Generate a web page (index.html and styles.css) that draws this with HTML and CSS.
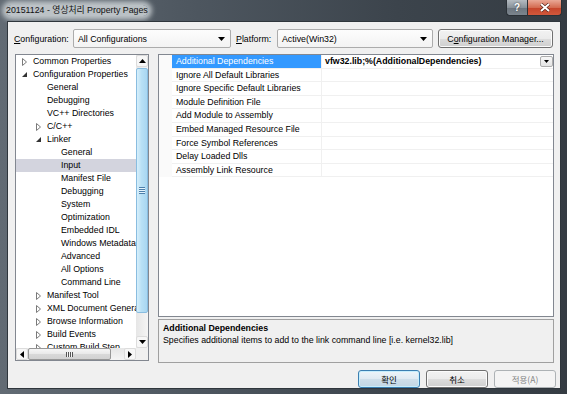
FILE: index.html
```html
<!DOCTYPE html>
<html lang="en">
<head>
  <meta charset="UTF-8" />
  <title>20151124 - 영상처리 Property Pages</title>
  <link rel="stylesheet" href="styles.css">
</head>
<body>
  <div class="window">
    <div class="titlebar">
      <span class="title">20151124 - 영상처리 Property Pages</span>
      <div class="caption-buttons">
        <span class="cap-btn cap-help">?</span>
        <span class="cap-btn cap-close">
          <svg width="10" height="9" viewBox="0 0 10 9"><path d="M1 1 L9 8 M9 1 L1 8" stroke="#4a1a10" stroke-width="3.2"/><path d="M1 1 L9 8 M9 1 L1 8" stroke="#fff" stroke-width="2"/></svg>
        </span>
      </div>
    </div>

    <div class="client">
      <div class="config-row">
        <span class="label label-config"><u>C</u>onfiguration:</span>
        <div class="combo combo-config">
          <span>All Configurations</span>
          <svg class="combo-arrow" width="7" height="4" viewBox="0 0 7 4"><polygon points="0,0 7,0 3.5,4" fill="#000"/></svg>
        </div>
        <span class="label label-platform"><u>P</u>latform:</span>
        <div class="combo combo-platform">
          <span>Active(Win32)</span>
          <svg class="combo-arrow" width="7" height="4" viewBox="0 0 7 4"><polygon points="0,0 7,0 3.5,4" fill="#000"/></svg>
        </div>
        <button class="btn btn-manager">C<u>o</u>nfiguration Manager...</button>
      </div>

      <div class="main">
        <div class="tree">
          <div class="tree-body">
            <div class="tree-items">
              <div class="tree-row lvl-0"><span class="twisty"><svg width="5" height="8" viewBox="0 0 5 8"><polygon points="0.5,0.5 4.5,4 0.5,7.5" fill="#fff" stroke="#7a7a7a"/></svg></span>Common Properties</div>
              <div class="tree-row lvl-0"><span class="twisty"><svg width="5" height="5" viewBox="0 0 5 5"><polygon points="5,0 5,5 0,5" fill="#333"/></svg></span>Configuration Properties</div>
              <div class="tree-row lvl-1"><span class="twisty"></span>General</div>
              <div class="tree-row lvl-1"><span class="twisty"></span>Debugging</div>
              <div class="tree-row lvl-1"><span class="twisty"></span>VC++ Directories</div>
              <div class="tree-row lvl-1"><span class="twisty"><svg width="5" height="8" viewBox="0 0 5 8"><polygon points="0.5,0.5 4.5,4 0.5,7.5" fill="#fff" stroke="#7a7a7a"/></svg></span>C/C++</div>
              <div class="tree-row lvl-1"><span class="twisty"><svg width="5" height="5" viewBox="0 0 5 5"><polygon points="5,0 5,5 0,5" fill="#333"/></svg></span>Linker</div>
              <div class="tree-row lvl-2"><span class="twisty"></span>General</div>
              <div class="tree-row lvl-2 selected"><span class="twisty"></span>Input</div>
              <div class="tree-row lvl-2"><span class="twisty"></span>Manifest File</div>
              <div class="tree-row lvl-2"><span class="twisty"></span>Debugging</div>
              <div class="tree-row lvl-2"><span class="twisty"></span>System</div>
              <div class="tree-row lvl-2"><span class="twisty"></span>Optimization</div>
              <div class="tree-row lvl-2"><span class="twisty"></span>Embedded IDL</div>
              <div class="tree-row lvl-2"><span class="twisty"></span>Windows Metadata</div>
              <div class="tree-row lvl-2"><span class="twisty"></span>Advanced</div>
              <div class="tree-row lvl-2"><span class="twisty"></span>All Options</div>
              <div class="tree-row lvl-2"><span class="twisty"></span>Command Line</div>
              <div class="tree-row lvl-1"><span class="twisty"><svg width="5" height="8" viewBox="0 0 5 8"><polygon points="0.5,0.5 4.5,4 0.5,7.5" fill="#fff" stroke="#7a7a7a"/></svg></span>Manifest Tool</div>
              <div class="tree-row lvl-1"><span class="twisty"><svg width="5" height="8" viewBox="0 0 5 8"><polygon points="0.5,0.5 4.5,4 0.5,7.5" fill="#fff" stroke="#7a7a7a"/></svg></span>XML Document Generator</div>
              <div class="tree-row lvl-1"><span class="twisty"><svg width="5" height="8" viewBox="0 0 5 8"><polygon points="0.5,0.5 4.5,4 0.5,7.5" fill="#fff" stroke="#7a7a7a"/></svg></span>Browse Information</div>
              <div class="tree-row lvl-1"><span class="twisty"><svg width="5" height="8" viewBox="0 0 5 8"><polygon points="0.5,0.5 4.5,4 0.5,7.5" fill="#fff" stroke="#7a7a7a"/></svg></span>Build Events</div>
              <div class="tree-row lvl-1"><span class="twisty"><svg width="5" height="8" viewBox="0 0 5 8"><polygon points="0.5,0.5 4.5,4 0.5,7.5" fill="#fff" stroke="#7a7a7a"/></svg></span>Custom Build Step</div>
            </div>
            <div class="vscroll">
              <div class="sb-btn"><svg width="7" height="4" viewBox="0 0 7 4"><polygon points="0,4 7,4 3.5,0" fill="#000"/></svg></div>
              <div class="vthumb"><span class="grip-v"></span></div>
              <div class="sb-track"></div>
              <div class="sb-btn"><svg width="7" height="4" viewBox="0 0 7 4"><polygon points="0,0 7,0 3.5,4" fill="#000"/></svg></div>
            </div>
          </div>
          <div class="hscroll">
            <div class="sb-btn"><svg width="4" height="7" viewBox="0 0 4 7"><polygon points="4,0 4,7 0,3.5" fill="#000"/></svg></div>
            <div class="hthumb"><span class="grip-h"></span></div>
            <div class="sb-track"></div>
            <div class="sb-btn"><svg width="4" height="7" viewBox="0 0 4 7"><polygon points="0,0 0,7 4,3.5" fill="#000"/></svg></div>
            <div class="sb-corner"></div>
          </div>
        </div>

        <div class="right">
          <div class="grid">
            <div class="grid-row">
              <span class="margin"></span>
              <span class="name selected">Additional Dependencies</span>
              <span class="value bold">vfw32.lib;%(AdditionalDependencies)
                <span class="drop-btn"><svg width="5" height="3" viewBox="0 0 5 3"><polygon points="0,0 5,0 2.5,3" fill="#000"/></svg></span>
              </span>
            </div>
            <div class="grid-row"><span class="margin"></span><span class="name">Ignore All Default Libraries</span><span class="value"></span></div>
            <div class="grid-row"><span class="margin"></span><span class="name">Ignore Specific Default Libraries</span><span class="value"></span></div>
            <div class="grid-row"><span class="margin"></span><span class="name">Module Definition File</span><span class="value"></span></div>
            <div class="grid-row"><span class="margin"></span><span class="name">Add Module to Assembly</span><span class="value"></span></div>
            <div class="grid-row"><span class="margin"></span><span class="name">Embed Managed Resource File</span><span class="value"></span></div>
            <div class="grid-row"><span class="margin"></span><span class="name">Force Symbol References</span><span class="value"></span></div>
            <div class="grid-row"><span class="margin"></span><span class="name">Delay Loaded Dlls</span><span class="value"></span></div>
            <div class="grid-row"><span class="margin"></span><span class="name">Assembly Link Resource</span><span class="value"></span></div>
          </div>
          <div class="desc">
            <div class="desc-title">Additional Dependencies</div>
            <div class="desc-text">Specifies additional items to add to the link command line [i.e. kernel32.lib]</div>
          </div>
        </div>
      </div>

      <div class="dialog-buttons">
        <button class="btn btn-default">확인</button>
        <button class="btn">취소</button>
        <button class="btn btn-disabled">적용(A)</button>
      </div>
    </div>
  </div>
</body>
</html>
```

FILE: styles.css
```css
* {
  box-sizing: border-box;
}
body {
  margin: 0;
  width: 567px;
  height: 394px;
  overflow: hidden;
  font-family: "Liberation Sans", "Noto Sans CJK KR", sans-serif;
  font-size: 8.8px;
  color: #000;
  background: #3f474f;
}
.window {
  height: 394px;
  display: flex;
  flex-direction: column;
  background: linear-gradient(to right, #626b74 0%, #4d565f 35%, #3c444c 70%, #353c43 100%);
}

/* title bar */
.titlebar {
  height: 21px;
  display: flex;
  align-items: flex-start;
  padding-left: 6px;
}
.title {
  margin-top: 5px;
  font-size: 8.8px;
  color: #111;
  background: rgba(205, 210, 214, 0.85);
  box-shadow: 0 0 5px 4px rgba(205, 210, 214, 0.85);
  border-radius: 6px;
  line-height: 11px;
}
.caption-buttons {
  margin-left: auto;
  margin-right: 5px;
  display: flex;
}
.cap-btn {
  height: 16px;
  display: flex;
  align-items: center;
  justify-content: center;
  border: 1px solid #2b3137;
  border-top: none;
}
.cap-help {
  width: 21px;
  border-radius: 0 0 0 4px;
  border-right: none;
  background: linear-gradient(#b4bbc1, #8a939b 50%, #6c757e 51%, #7c858e);
  color: #fff;
  font-weight: bold;
  font-size: 10px;
  text-shadow: 0 0 2px #333;
}
.cap-close {
  width: 35px;
  border-radius: 0 0 4px 0;
  background: linear-gradient(#e9a896, #d46c52 50%, #c5442a 51%, #d2583c);
}

/* client area */
.client {
  margin: 0 6px 5px 7px;
  height: 368px;
  border: 1px solid #2f363c;
  background: #f0f0f0;
  padding: 7px 4px 0 6px;
  display: flex;
  flex-direction: column;
}
.config-row {
  display: flex;
  align-items: center;
  height: 19px;
}
.label-config {
  width: 59px;
}
.label-platform {
  width: 41px;
  margin-left: 5px;
}
.combo {
  height: 19px;
  display: flex;
  align-items: center;
  padding: 0 4px;
  border: 1px solid #acacac;
  border-radius: 2px;
  background: linear-gradient(#fdfdfd, #f3f3f3);
}
.combo-config {
  width: 158px;
}
.combo-platform {
  width: 156px;
}
.combo-arrow {
  margin-left: auto;
  margin-right: 1px;
}
.btn {
  font-family: inherit;
  font-size: 8.8px;
  color: #000;
  height: 18px;
  padding: 0;
  border: 1px solid #707070;
  border-radius: 3px;
  background: linear-gradient(#f2f2f2, #ebebeb 50%, #dddddd 51%, #cfcfcf);
  box-shadow: inset 0 0 0 1px #fbfbfb;
}
.btn-manager {
  width: 115px;
  height: 19px;
  margin-left: 5px;
}

/* main panes */
.main {
  display: grid;
  grid-template-columns: 134px 396px;
  column-gap: 9px;
  margin-top: 6px;
  margin-left: 1px;
}
.tree {
  height: 307px;
  border: 1px solid #828790;
  background: #fff;
  display: flex;
  flex-direction: column;
}
.tree-body {
  height: 293px;
  display: flex;
}
.tree-items {
  width: 120px;
  overflow: hidden;
}
.tree-row {
  height: 13px;
  line-height: 13px;
  white-space: nowrap;
  display: flex;
  align-items: center;
}
.tree-row.selected {
  background: #d3d4de;
}
.lvl-1 {
  padding-left: 14px;
}
.lvl-2 {
  padding-left: 28px;
}
.twisty {
  width: 17px;
  flex: none;
  display: flex;
  align-items: center;
  padding-left: 6px;
}

/* scrollbars */
.vscroll {
  width: 12px;
  display: flex;
  flex-direction: column;
  background: linear-gradient(to right, #e6e6e6, #f5f5f5);
}
.sb-btn {
  width: 12px;
  height: 12px;
  flex: none;
  display: flex;
  align-items: center;
  justify-content: center;
  border: 1px solid #dcdcdc;
  border-radius: 2px;
  background: #f7f7f7;
}
.vthumb {
  height: 245px;
  margin-top: 1px;
  border: 1px solid #89bde0;
  border-radius: 2px;
  background: linear-gradient(to right, #d7effb, #b8e0f5 45%, #a8d6f1);
  display: flex;
  align-items: center;
  justify-content: center;
}
.grip-v {
  width: 6px;
  height: 7px;
  background: repeating-linear-gradient(#4c7fab 0 1px, #e6f5fd 1px 2px);
}
.sb-track {
  flex: 1;
}
.hscroll {
  height: 12px;
  display: flex;
  background: linear-gradient(#e6e6e6, #f5f5f5);
}
.hthumb {
  width: 83px;
  border: 1px solid #979797;
  border-radius: 2px;
  background: linear-gradient(#f6f6f6, #e9e9e9 50%, #d9d9d9 51%, #d2d2d2);
  display: flex;
  align-items: center;
  justify-content: center;
}
.grip-h {
  width: 7px;
  height: 5px;
  background: repeating-linear-gradient(to right, #555 0 1px, #f3f3f3 1px 2px);
}
.sb-corner {
  width: 12px;
  background: #f0f0f0;
}

/* property grid */
.right {
  display: flex;
  flex-direction: column;
  gap: 2px;
}
.grid {
  height: 263px;
  border: 1px solid #828790;
  background: #fff;
}
.grid-row {
  height: 13.6px;
  display: grid;
  grid-template-columns: 13px 150px 1fr;
}
.margin {
  background: #fafafa;
}
.name, .value {
  border-bottom: 1px solid #f0f0f0;
  line-height: 12.6px;
  white-space: nowrap;
  overflow: hidden;
}
.name {
  padding-left: 4px;
  border-right: 1px solid #f0f0f0;
}
.name.selected {
  background: #3399ff;
  color: #fff;
}
.value {
  padding-left: 3px;
  display: flex;
  align-items: center;
}
.bold {
  font-weight: bold;
}
.drop-btn {
  margin-left: auto;
  width: 13px;
  height: 11px;
  display: flex;
  align-items: center;
  justify-content: center;
  border: 1px solid #acacac;
  border-radius: 2px;
  background: linear-gradient(#f7f7f7, #e4e4e4);
}
.desc {
  height: 44px;
  border: 1px solid #a0a0a0;
  background: #f0f0f0;
  padding: 2px 4px;
  line-height: 12px;
}
.desc-title {
  font-weight: bold;
}

/* dialog buttons */
.dialog-buttons {
  display: flex;
  justify-content: flex-end;
  gap: 6px;
  margin-top: 7px;
}
.dialog-buttons .btn {
  width: 62px;
  font-family: "Noto Sans CJK KR", sans-serif;
  font-size: 8.5px;
}
.btn-default {
  border-color: #3c7fb1;
  background: linear-gradient(#edf5fa, #dfeaf2 50%, #cfdfea 51%, #c2d6e4);
  box-shadow: inset 0 0 0 1px #c6eefd;
}
.btn-disabled {
  border-color: #adb2b5;
  background: #f4f4f4;
  box-shadow: none;
  color: #838383 !important;
}
```
